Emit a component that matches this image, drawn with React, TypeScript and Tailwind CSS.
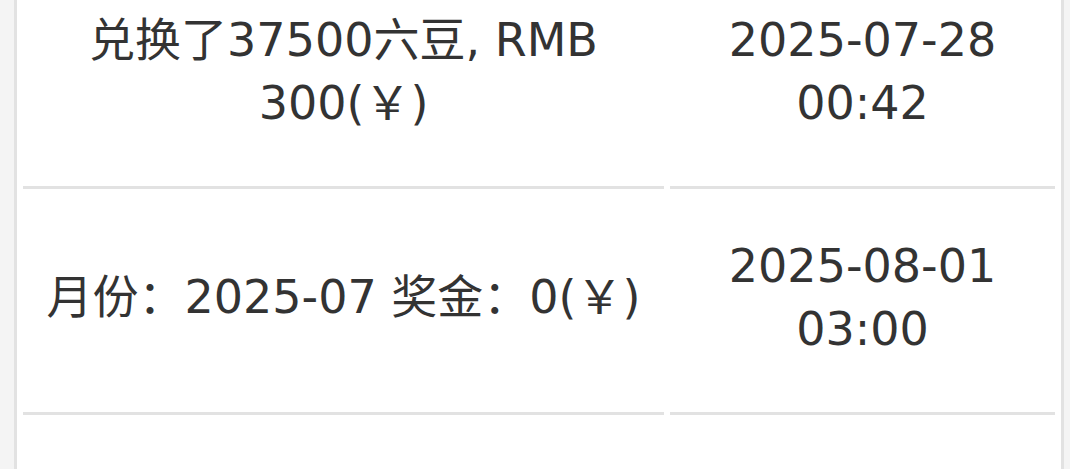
export default function App() {
  const rows = [
    { left: "兑换了37500六豆, RMB 300(￥)", right: "2025-07-28 00:42" },
    { left: "月份：2025-07 奖金：0(￥)", right: "2025-08-01 03:00" },
    { left: "", right: "" },
  ];

  return (
    <div className="h-screen overflow-hidden bg-[#f4f4f4] pl-[14px] pr-[6px]">
      <div
        className="h-full overflow-hidden border-x-[3px] border-[#e2e2e2] bg-white px-[6px] text-[46px] leading-[63px] text-[#333]"
        style={{ fontFamily: '"DejaVu Sans", "Noto Sans CJK SC", sans-serif' }}
      >
        <div className="mt-[-37px] grid grid-cols-[641px_1fr] gap-x-[6px]">
          {rows.map((r, i) => (
            <div key={i} className="contents">
              <div className="flex h-[226px] items-center justify-center border-b-[3px] border-[#e2e2e2] px-[20px] pb-[6px] text-center">
                {r.left}
              </div>
              <div className="flex h-[226px] items-center justify-center border-b-[3px] border-[#e2e2e2] px-[20px] pb-[6px] text-center">
                {r.right}
              </div>
            </div>
          ))}
        </div>
      </div>
    </div>
  );
}
